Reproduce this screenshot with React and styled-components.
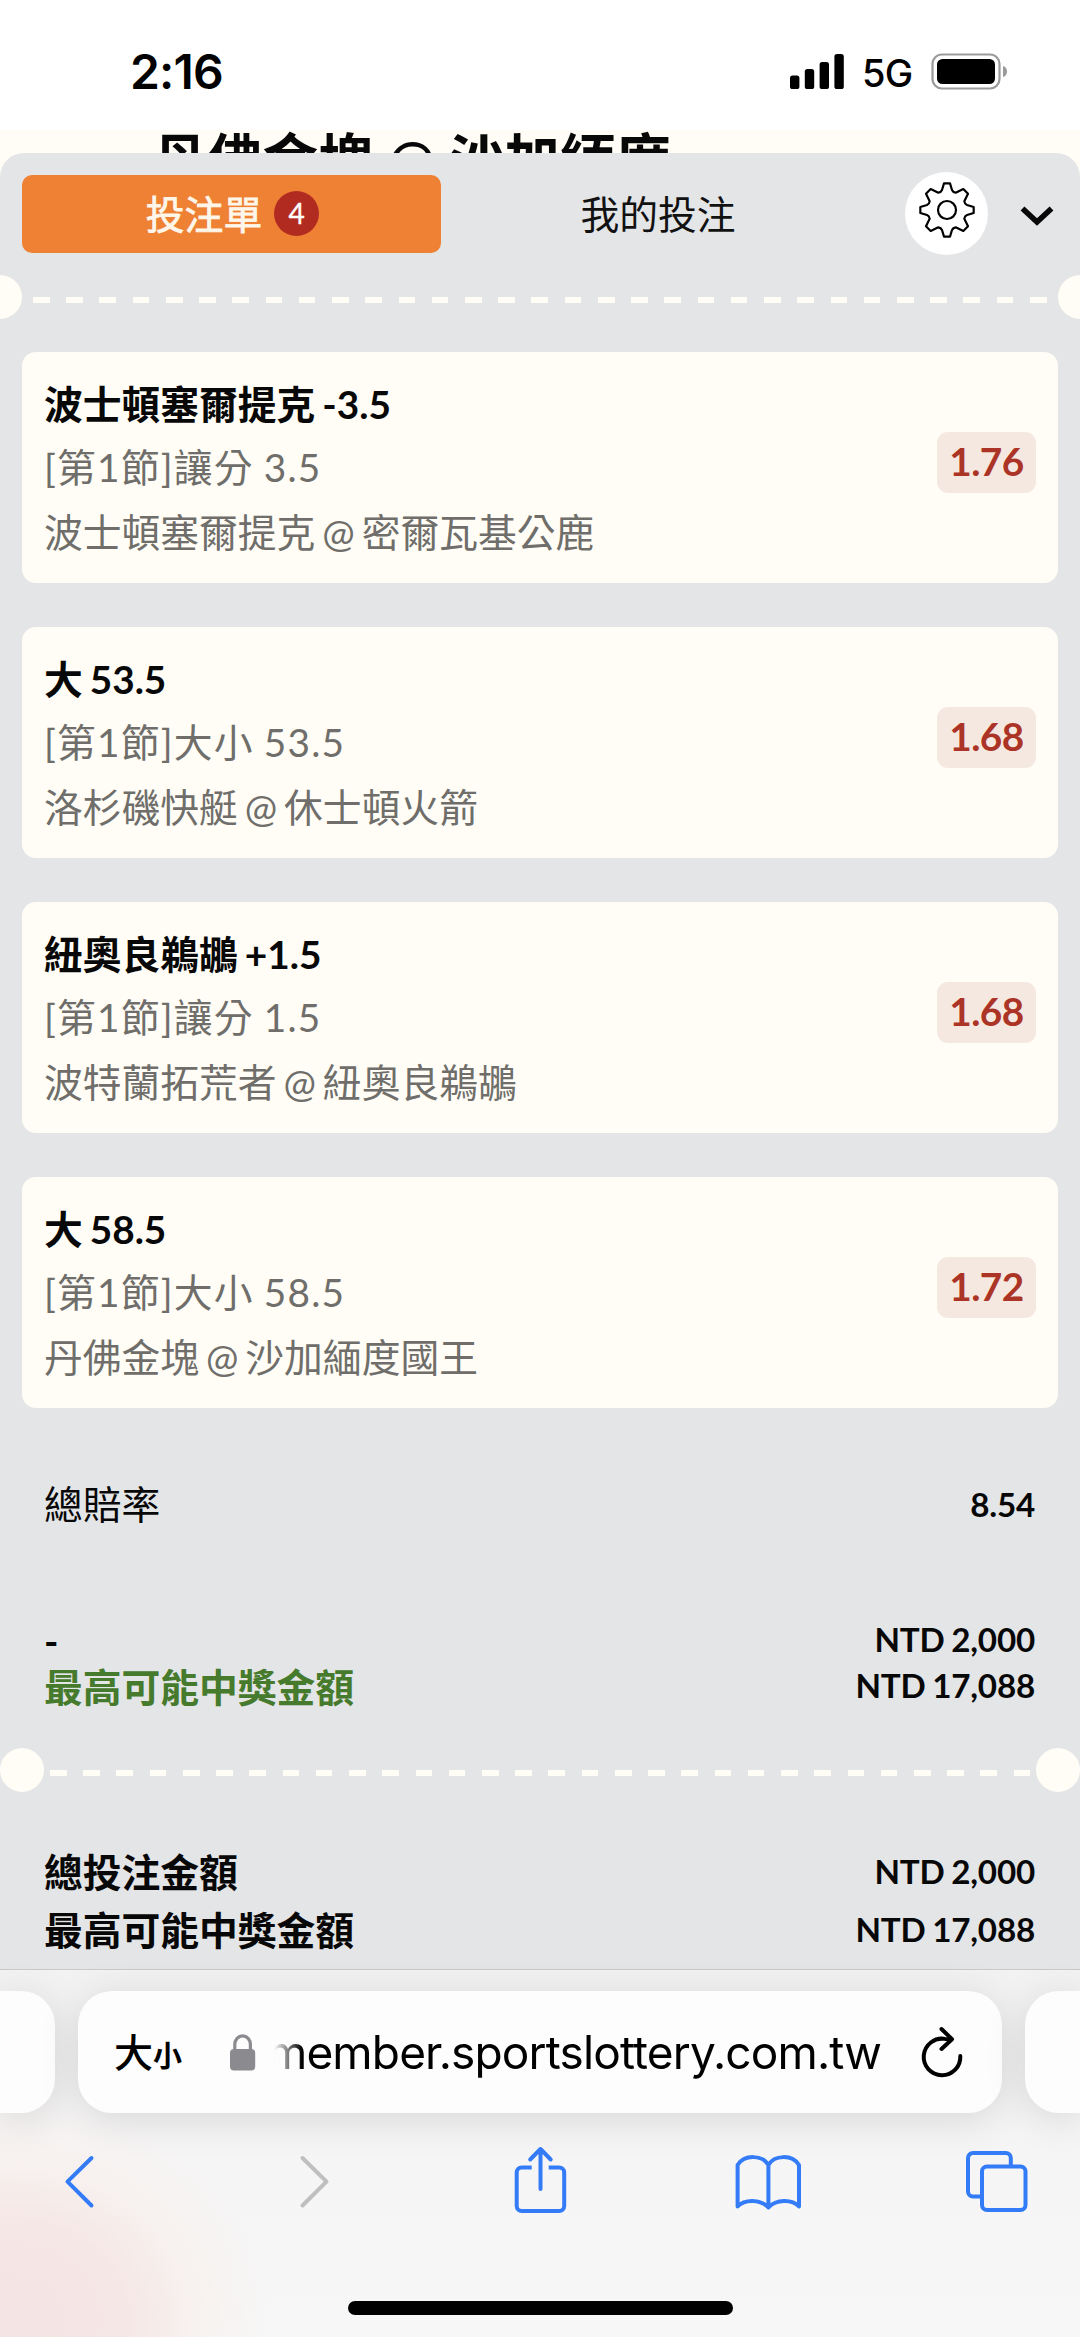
import React from "react";
import styled, { createGlobalStyle } from "styled-components";

const bets = [
  {
    id: 1,
    pick: "波士頓塞爾提克 -3.5",
    market: "[第1節]讓分 3.5",
    match: "波士頓塞爾提克 @ 密爾瓦基公鹿",
    odds: "1.76",
  },
  {
    id: 2,
    pick: "大 53.5",
    market: "[第1節]大小 53.5",
    match: "洛杉磯快艇 @ 休士頓火箭",
    odds: "1.68",
  },
  {
    id: 3,
    pick: "紐奧良鵜鶘 +1.5",
    market: "[第1節]讓分 1.5",
    match: "波特蘭拓荒者 @ 紐奧良鵜鶘",
    odds: "1.68",
  },
  {
    id: 4,
    pick: "大 58.5",
    market: "[第1節]大小 58.5",
    match: "丹佛金塊 @ 沙加緬度國王",
    odds: "1.72",
  },
];

function StatusBar() {
  return (
    <Status>
      <Clock>2:16</Clock>
      <StatusRight>
        <svg width="54" height="36" viewBox="0 0 54 36">
          <rect x="0" y="21.5" width="9.4" height="13.5" rx="2.6" />
          <rect x="14.8" y="15" width="9.4" height="20" rx="2.6" />
          <rect x="29.6" y="8" width="9.4" height="27" rx="2.6" />
          <rect x="44.4" y="0" width="9.4" height="35" rx="2.6" />
        </svg>
        <Network>5G</Network>
        <svg width="77" height="38" viewBox="0 0 77 38">
          <rect
            x="1.5"
            y="1.5"
            width="67"
            height="34"
            rx="9.5"
            fill="none"
            stroke="#9b9b9b"
            strokeWidth="2.2"
          />
          <rect x="6" y="6" width="58" height="25" rx="5.5" />
          <path d="M72 13c5.4 1.4 5.4 9.6 0 11z" fill="#9b9b9b" />
        </svg>
      </StatusRight>
    </Status>
  );
}

function SheetHeader() {
  return (
    <Header>
      <Tab $active>
        投注單
        <Count>4</Count>
      </Tab>
      <Tab>我的投注</Tab>
      <GearButton>
        <svg width="60" height="60" viewBox="-90 -90 180 180">
          <path d="M-9-80H9L15-60Q18-53 26-52L49-63 63-49 52-26Q53-18 60-15L80-9V9L60 15Q53 18 52 26L63 49 49 63 26 52Q18 53 15 60L9 80H-9L-15 60Q-18 53-26 52L-49 63-63 49-52 26Q-53 18-60 15L-80 9V-9L-60-15Q-53-18-52-26L-63-49-49-63-26-52Q-18-53-15-60Z" />
          <circle r="27" />
        </svg>
      </GearButton>
      <CollapseButton>
        <svg width="34" height="20" viewBox="0 0 34 20">
          <path d="M2.5 2.5 17 16 31.5 2.5" />
        </svg>
      </CollapseButton>
    </Header>
  );
}

function BetCard({ pick, market, match, odds }) {
  return (
    <Card>
      <div>
        <Pick>{pick}</Pick>
        <Market>{market}</Market>
        <Match>{match}</Match>
      </div>
      <Odds>{odds}</Odds>
    </Card>
  );
}

function Perforation({ cut }) {
  return (
    <Tear $cut={cut}>
      <i />
      <Dashes $cut={cut} />
      <i />
    </Tear>
  );
}

function BrowserBar() {
  return (
    <Browser>
      <AddressRow>
        <SideTab $side="left" />
        <Address>
          <TextSize>
            大<small>小</small>
          </TextSize>
          <svg width="26" height="37" viewBox="0 0 26 37" fill="#8a8a8f">
            <rect x="0" y="15" width="25.2" height="21.5" rx="4" />
            <path
              d="M4.8 17V10.5a7.8 8.6 0 0 1 15.6 0V17"
              fill="none"
              stroke="#8a8a8f"
              strokeWidth="3.2"
            />
          </svg>
          <Url>
            <span>member.sportslottery.com.tw</span>
          </Url>
          <Stroke width="44" height="52" viewBox="0 0 44 52" $color="#000">
            <path d="M30 13.2 24 12.9A18.3 18.3 0 1 0 39.3 30" />
            <path d="M20.5 3 31 13.2 20.5 23" />
          </Stroke>
        </Address>
        <SideTab $side="right" />
      </AddressRow>
      <Toolbar>
        <Stroke width="72" height="72" viewBox="0 0 72 72">
          <path d="M48.5 14 24.5 37.7 48.5 61.5" />
        </Stroke>
        <Stroke width="72" height="72" viewBox="0 0 72 72" $color="#bfbfbf">
          <path d="M30.5 14 54.5 37.7 30.5 61.5" />
        </Stroke>
        <Stroke width="72" height="72" viewBox="0 0 72 72">
          <g transform="translate(11.7 1)">
            <path
              strokeLinecap="butt"
              d="M18 22.5H8a5 5 0 0 0-5 5V61a5 5 0 0 0 5 5h37.5a5 5 0 0 0 5-5V27.5a5 5 0 0 0-5-5H35"
            />
            <path d="M26.8 44V4M16.5 14.5 26.8 4 37 14.5" />
          </g>
        </Stroke>
        <Stroke width="72" height="72" viewBox="0 0 72 72">
          <path
            transform="translate(3.6 10)"
            d="M33.8 11C28 1 10 0 3 11V52.5C10 45 26 45 33.8 53.5 41.6 45 57.5 45 64.4 52.5V11C57.5 0 39.6 1 33.8 11V53.5"
          />
        </Stroke>
        <Stroke width="72" height="72" viewBox="0 0 72 72">
          <g transform="translate(4 5.5)">
            <rect x="18" y="17" width="43.5" height="43.5" rx="5" />
            <path
              strokeLinecap="butt"
              d="M46.8 16V8.5a5 5 0 0 0-5-5H9a5 5 0 0 0-5 5V42a5 5 0 0 0 5 5h8"
            />
          </g>
        </Stroke>
      </Toolbar>
      <HomeIndicator />
    </Browser>
  );
}

function App() {
  return (
    <Screen>
      <GlobalStyle />
      <StatusBar />
      <Behind>丹佛金塊 @ 沙加緬度</Behind>
      <SheetBack>
        <Sheet>
          <SheetHeader />
          <Perforation cut />
          <CardList>
            {bets.map((bet) => (
              <BetCard key={bet.id} {...bet} />
            ))}
          </CardList>
          <TotalOdds>
            <Label $light>總賠率</Label>
            <Value>8.54</Value>
          </TotalOdds>
          <Stake>
            <Label>-</Label>
            <Value>NTD 2,000</Value>
            <Label $green>最高可能中獎金額</Label>
            <Value>NTD 17,088</Value>
          </Stake>
          <Perforation />
          <Totals>
            <Label>總投注金額</Label>
            <Value>NTD 2,000</Value>
            <Label>最高可能中獎金額</Label>
            <Value>NTD 17,088</Value>
          </Totals>
        </Sheet>
      </SheetBack>
      <BrowserBar />
    </Screen>
  );
}

const GlobalStyle = createGlobalStyle`
  * {
    box-sizing: border-box;
  }
  body {
    margin: 0;
    background: #fff;
  }
`;

const Screen = styled.div`
  width: 1080px;
  height: 2337px;
  overflow: hidden;
  display: flex;
  flex-direction: column;
  color: #080808;
  font-family: Lato, "Noto Sans CJK TC", sans-serif;
  font-size: 38.77px;
  white-space: nowrap;
`;

const Status = styled.header`
  height: 130px;
  flex: none;
  display: flex;
  justify-content: space-between;
  padding: 0 72px 0 130px;
  background: #fff;
  color: #000;
  font-family: Inter, sans-serif;
`;

const Clock = styled.div`
  margin-top: 42px;
  font-size: 48px;
  line-height: 60px;
  font-weight: 600;
  letter-spacing: -0.8px;
`;

const StatusRight = styled.div`
  display: flex;
  align-items: flex-start;
  padding-top: 53px;
  svg:first-child {
    margin-top: 1px;
  }
`;

const Network = styled.span`
  width: 87px;
  padding-left: 18px;
  font-size: 38px;
  line-height: 40px;
  font-weight: 500;
  letter-spacing: -0.8px;
`;

const Behind = styled.div`
  height: 23px;
  flex: none;
  overflow: hidden;
  padding-left: 152px;
  background: #fffdf6;
  font-size: 55.4px;
  line-height: 58px;
  font-weight: 700;
  word-spacing: 1px;
`;

const SheetBack = styled.div`
  height: 1816px;
  flex: none;
  background: #fffdf6;
`;

const Sheet = styled.main`
  height: 100%;
  overflow: hidden;
  border-radius: 24px 24px 0 0;
  background: #e4e5e7;
`;

const Header = styled.div`
  height: 122px;
  padding: 19px 22px 0;
  display: flex;
  align-items: flex-start;
`;

const Tab = styled.div`
  width: 419px;
  height: 78px;
  margin-top: 3px;
  padding: 0 0 4px 2px;
  display: flex;
  align-items: center;
  justify-content: center;
  gap: 12px;
  border-radius: 10px;
  background: ${(props) => (props.$active ? "#ee8133" : "transparent")};
  color: ${(props) => (props.$active ? "#fff6ea" : "#111")};
  -webkit-text-stroke: ${(props) => (props.$active ? "0.8px" : "0")};
  & + & {
    width: 432px;
  }
`;

const Count = styled.span`
  width: 45px;
  height: 45px;
  margin-top: 3px;
  border-radius: 50%;
  background: #b22b21;
  color: #fff;
  font-size: 28px;
  line-height: 44px;
  text-align: center;
  -webkit-text-stroke: 0.4px;
`;

const GearButton = styled.div`
  width: 83px;
  height: 83px;
  margin-left: 32px;
  padding: 8px 0 0 12px;
  border-radius: 50%;
  background: #fff;
  svg {
    display: block;
    fill: none;
    stroke: #000;
    stroke-width: 6.5;
    stroke-linejoin: round;
  }
`;

const CollapseButton = styled.div`
  margin: 34px 0 0 32px;
  svg {
    display: block;
    fill: none;
    stroke: #080808;
    stroke-width: 5.6;
  }
`;

const Tear = styled.div`
  height: 44px;
  margin: ${(props) => (props.$cut ? "0 -22px" : "0")};
  display: flex;
  align-items: center;
  justify-content: space-between;
  i {
    width: 44px;
    height: 44px;
    border-radius: 50%;
    background: #fffdf6;
  }
`;

const Dashes = styled.div`
  width: ${(props) => (props.$cut ? 1014 : 980)}px;
  height: 6px;
  margin-top: 6px;
  background: repeating-linear-gradient(
    90deg,
    #fffdf6 0 16.6px,
    transparent 16.6px 33.23px
  );
`;

const CardList = styled.section`
  padding: 33px 22px 0;
  display: flex;
  flex-direction: column;
  gap: 44px;
`;

const Card = styled.article`
  height: 231px;
  padding: 22px 22px 0 22px;
  display: flex;
  justify-content: space-between;
  align-items: flex-start;
  border-radius: 14px;
  background: #fffdf6;
`;

const Pick = styled.div`
  line-height: 60px;
  font-weight: 700;
  word-spacing: -2.5px;
`;

const Market = styled.div`
  line-height: 66px;
  letter-spacing: 1.2px;
  word-spacing: -1px;
  color: #6f6e6a;
`;

const Match = styled.div`
  line-height: 64px;
  word-spacing: -3px;
  color: #6f6e6a;
`;

const Odds = styled.div`
  width: 99px;
  height: 61px;
  margin-top: 58px;
  border-radius: 11px;
  background: #f5e8e0;
  color: #ab3426;
  line-height: 58px;
  font-weight: 700;
  letter-spacing: -0.6px;
  text-align: center;
`;

const Label = styled.div`
  font-weight: ${(props) => (props.$light ? 400 : 700)};
  color: ${(props) => (props.$green ? "#467a2c" : "#080808")};
`;

const Value = styled.div`
  font-size: 33.2px;
  font-weight: 700;
  letter-spacing: -0.2px;
  word-spacing: -1.2px;
  text-align: right;
`;

const Rows = styled.section`
  display: grid;
  grid-template-columns: auto auto;
  justify-content: space-between;
  padding: 0 45px 0 44px;
`;

const TotalOdds = styled(Rows)`
  padding-top: 66px;
  line-height: 60px;
`;

const Stake = styled(Rows)`
  height: 214px;
  padding-top: 84px;
  grid-template-rows: 46px 46px;
  line-height: 46px;
  ${Value} {
    line-height: 42px;
  }
`;

const Totals = styled(Rows)`
  padding-top: 52px;
  grid-template-rows: 58px 58px;
  line-height: 57px;
  ${Value} {
    line-height: 55px;
  }
`;

const Browser = styled.footer`
  flex: 1;
  display: flex;
  flex-direction: column;
  border-top: 1px solid #c9c9ca;
  background:
    radial-gradient(
      ellipse 260px 220px at 10px 350px,
      #f4e4e3 0%,
      #f5e7e5 45%,
      rgba(247, 239, 236, 0.7) 70%,
      rgba(246, 243, 240, 0) 100%
    ),
    linear-gradient(#f2f2f2, #f6f5f5 50%, #f7f7f7);
`;

const AddressRow = styled.div`
  height: 122px;
  margin-top: 21px;
  display: flex;
  gap: 23px;
`;

const SideTab = styled.div`
  width: 55px;
  background: #fdfdfd;
  border-radius: ${(props) =>
    props.$side === "left" ? "0 34px 34px 0" : "34px 0 0 34px"};
  box-shadow: 0 6px 40px rgba(0, 0, 0, 0.12);
`;

const Address = styled.div`
  flex: 1;
  padding: 0 37px 0 36px;
  display: flex;
  align-items: center;
  border-radius: 34px;
  background: #fdfdfd;
  box-shadow: 0 6px 40px rgba(0, 0, 0, 0.12);
  color: #000;
`;

const TextSize = styled.div`
  width: 116px;
  font-family: "Noto Sans CJK TC", sans-serif;
  font-weight: 500;
  font-size: 39px;
  line-height: 60px;
  small {
    font-size: 29px;
    font-weight: 700;
  }
`;

/* long hosts are clipped on the left and fade in */
const Url = styled.div`
  width: 607px;
  margin: 0 auto 0 18px;
  display: flex;
  justify-content: flex-end;
  overflow: hidden;
  font-family: Inter, sans-serif;
  font-size: 46px;
  line-height: 64px;
  letter-spacing: -0.85px;
  mask-image: linear-gradient(90deg, transparent, #000 28px);
`;

const Stroke = styled.svg`
  flex: none;
  fill: none;
  stroke: ${(props) => props.$color || "#347cf7"};
  stroke-width: 4;
  stroke-linecap: round;
  stroke-linejoin: round;
`;

const Toolbar = styled.nav`
  margin-top: 31px;
  padding: 0 48px 0 43px;
  display: flex;
  justify-content: space-between;
`;

const HomeIndicator = styled.div`
  width: 385px;
  height: 14px;
  margin: 85px auto 0;
  border-radius: 7px;
  background: #000;
`;

export default App;
